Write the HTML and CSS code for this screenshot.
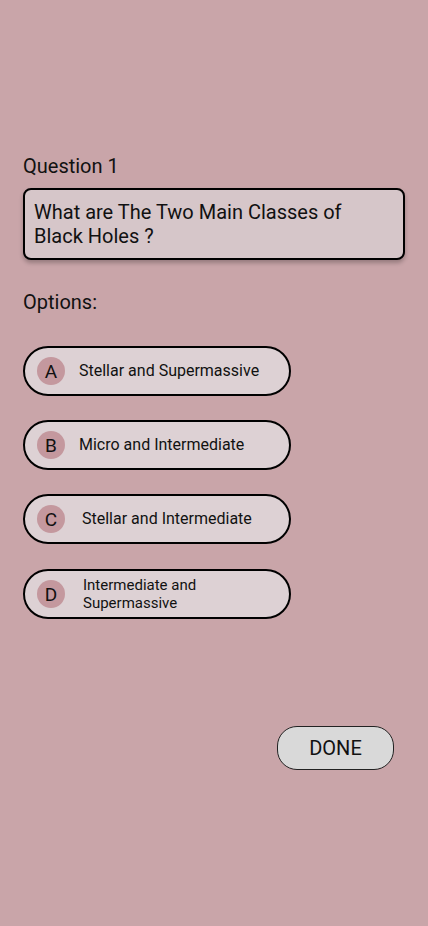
FILE: index.html
```html
<!DOCTYPE html>
<html>
<head>
<meta charset="utf-8">
<link rel="stylesheet" href="styles.css">
</head>
<body>
<div class="screen">
  <div class="label q-label">Question 1</div>
  <div class="question">What are The Two Main Classes of Black Holes ?</div>
  <div class="label opt-label">Options:</div>
  <div class="options">
    <div class="option"><span class="letter">A</span><span class="text">Stellar and Supermassive</span></div>
    <div class="option"><span class="letter">B</span><span class="text">Micro and Intermediate</span></div>
    <div class="option"><span class="letter">C</span><span class="text t-c">Stellar and Intermediate</span></div>
    <div class="option opt-d"><span class="letter">D</span><span class="text t-d">Intermediate and<br>Supermassive</span></div>
  </div>
  <div class="actions"><button class="done">DONE</button></div>
</div>
</body>
</html>
```
FILE: styles.css
```css
* { box-sizing: border-box; }
html, body { margin: 0; padding: 0; }
body {
  background: #c9a5a9;
  font-family: Roboto, "Noto Sans", sans-serif;
  color: #111;
  width: 428px;
  height: 926px;
  overflow: hidden;
}
.screen {
  display: flex;
  flex-direction: column;
  padding: 154px 23px 0 23px;
}
.label {
  font-size: 20px;
  line-height: 24px;
}
.question {
  margin-top: 10px;
  width: 382px;
  height: 72px;
  border: 2px solid #000;
  border-radius: 8px;
  background: #d6c6c9;
  box-shadow: 0 3px 4px rgba(0,0,0,0.25);
  font-size: 20px;
  line-height: 24px;
  padding: 10px 9px;
}
.opt-label { margin-top: 30px; }
.options {
  display: flex;
  flex-direction: column;
  gap: 24px;
  margin-top: 32px;
}
.option {
  width: 268px;
  height: 50px;
  border: 2px solid #000;
  border-radius: 25px;
  background: #ddd1d4;
  display: flex;
  align-items: center;
  padding-left: 12px;
}
.opt-d { margin-top: 1px; }
.letter {
  width: 28px;
  height: 28px;
  border-radius: 50%;
  background: #c4989e;
  display: flex;
  align-items: center;
  justify-content: center;
  font-size: 19px;
  flex: none;
}
.text {
  margin-left: 14px;
  font-size: 16px;
  line-height: 18px;
}
.t-c { margin-left: 17px; }
.t-d { margin-left: 18px; font-size: 15px; }
.actions {
  display: flex;
  justify-content: flex-end;
  margin-top: 107px;
  padding-right: 11px;
}
.done {
  width: 117px;
  height: 44px;
  border: 1px solid #222;
  border-radius: 20px;
  background: #d9d9d9;
  font-family: Roboto, "Noto Sans", sans-serif;
  font-size: 20px;
  color: #111;
  padding: 0;
}
```
